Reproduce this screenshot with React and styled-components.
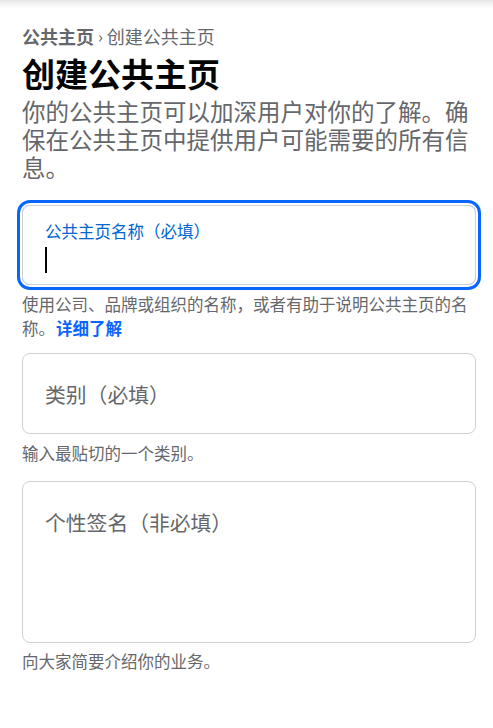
import React from "react";
import styled, { createGlobalStyle } from "styled-components";

const Global = createGlobalStyle`
  html, body { margin: 0; padding: 0; }
  body {
    background: #fff linear-gradient(to bottom, #e6e6e6 0px, #f7f7f7 5px, #ffffff 9px) no-repeat;
    font-family: "Noto Sans CJK SC", "Noto Sans", sans-serif;
    color: #050505;
  }
`;

const Page = styled.main`
  padding: 23px 17px 40px 22px;
  display: flex;
  flex-direction: column;
`;

const Breadcrumb = styled.nav`
  display: flex;
  align-items: center;
  gap: 4px;
  font-size: 18px;
  line-height: 26px;
  color: #65676b;
`;

const Crumb = styled.span`
  font-weight: ${(p) => (p.$strong ? 700 : 400)};
`;

const Sep = styled.span`
  font-size: 16px;
  color: #65676b;
`;

const Title = styled.h1`
  margin: 0;
  font-size: 33px;
  line-height: 48px;
  font-weight: 700;
  color: #050505;
`;

const Subtitle = styled.p`
  margin: 0;
  font-size: 23.5px;
  line-height: 28px;
  color: #65676b;
`;

const Field = styled.div`
  margin-top: ${(p) => p.$gap}px;
  box-sizing: border-box;
  height: ${(p) => p.$height}px;
  border: 1px solid #ced0d4;
  border-radius: 8px;
  padding: ${(p) => (p.$focused ? "14px 22px 0" : "27px 22px 0")};
  display: flex;
  flex-direction: column;
  align-items: flex-start;
  box-shadow: ${(p) =>
    p.$focused ? "0 0 0 2px #fff, 0 0 0 5px #0866ff" : "none"};
`;

const FloatLabel = styled.span`
  font-size: 16.5px;
  line-height: 22px;
  color: #0064d1;
`;

const Caret = styled.span`
  display: block;
  margin-top: 5px;
  width: 2px;
  height: 26px;
  background: #050505;
`;

const Placeholder = styled.span`
  font-size: 20.8px;
  line-height: 26px;
  color: #65676b;
`;

const Help = styled.p`
  margin: ${(p) => p.$top}px 0 0;
  font-size: 16.5px;
  line-height: 24px;
  color: #65676b;
`;

const Link = styled.a`
  margin-left: 1px;
  color: #0866ff;
  font-weight: 700;
  text-decoration: none;
`;

export default function App() {
  return (
    <>
      <Global />
      <Page>
        <Breadcrumb>
          <Crumb $strong>公共主页</Crumb>
          <Sep>›</Sep>
          <Crumb>创建公共主页</Crumb>
        </Breadcrumb>
        <Title>创建公共主页</Title>
        <Subtitle>
          你的公共主页可以加深用户对你的了解。确保在公共主页中提供用户可能需要的所有信息。
        </Subtitle>

        <Field $gap={24} $height={80} $focused>
          <FloatLabel>公共主页名称（必填）</FloatLabel>
          <Caret />
        </Field>
        <Help $top={7}>
          <span>使用公司、品牌或组织的名称，或者有助于说明公共主页的名</span>
          <span>称。</span>
          <Link href="#">详细了解</Link>
        </Help>

        <Field $gap={13} $height={81}>
          <Placeholder>类别（必填）</Placeholder>
        </Field>
        <Help $top={7}>输入最贴切的一个类别。</Help>

        <Field $gap={16} $height={162}>
          <Placeholder>个性签名（非必填）</Placeholder>
        </Field>
        <Help $top={6}>向大家简要介绍你的业务。</Help>
      </Page>
    </>
  );
}
